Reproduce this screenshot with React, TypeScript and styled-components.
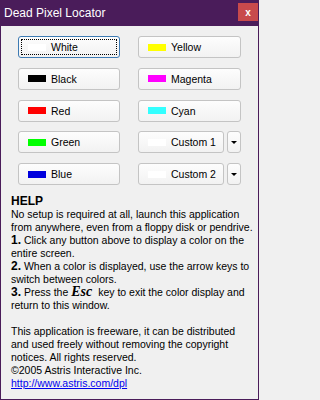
import React from 'react';
import styled, { createGlobalStyle } from 'styled-components';

const GlobalStyle = createGlobalStyle`
  html, body {
    margin: 0;
    padding: 0;
    background: #f0f0f0;
  }
  * {
    box-sizing: border-box;
  }
`;

interface ColorItem {
  label: string;
  swatch: string;
  custom?: boolean;
}

const COLORS: ColorItem[] = [
  { label: 'White', swatch: '#ffffff' },
  { label: 'Yellow', swatch: '#ffff00' },
  { label: 'Black', swatch: '#000000' },
  { label: 'Magenta', swatch: '#ff00ff' },
  { label: 'Red', swatch: '#ff0000' },
  { label: 'Cyan', swatch: '#33ffff' },
  { label: 'Green', swatch: '#00ff00' },
  { label: 'Custom 1', swatch: '#ffffff', custom: true },
  { label: 'Blue', swatch: '#0000dd' },
  { label: 'Custom 2', swatch: '#ffffff', custom: true },
];

// Window frame
const Window = styled.div`
  width: 259px;
  height: 400px;
  border: 1px solid #4a1c5a;
  border-top: none;
  background: #f0f0f0;
  display: flex;
  flex-direction: column;
  font-family: 'Liberation Sans', Arial, sans-serif;
  color: #000;
`;

const TitleBar = styled.div`
  height: 26px;
  margin: 0 -1px;
  padding: 0 1px 0 4px;
  background: #4a1c5a;
  display: flex;
  justify-content: space-between;
  align-items: flex-start;
`;

const Title = styled.span`
  color: #ffffff;
  font-size: 12px;
  line-height: 26px;
`;

const CloseButton = styled.div`
  width: 20px;
  height: 18px;
  margin-top: 3px;
  background: #c84a4c;
  color: #ffffff;
  font-weight: bold;
  font-size: 10px;
  display: flex;
  align-items: center;
  justify-content: center;
`;

const Content = styled.div`
  padding: 10px 0 0 10px;
  display: flex;
  flex-direction: column;
`;

const ButtonGrid = styled.div`
  margin-left: 7px;
  display: grid;
  grid-template-columns: 102px 103px;
  grid-auto-rows: 22px;
  column-gap: 18px;
  row-gap: 9.75px;
`;

const ColorButton = styled.button<{ $focused?: boolean }>`
  position: relative;
  height: 22px;
  width: 100%;
  margin: 0;
  padding: 0 0 0 9px;
  display: flex;
  align-items: center;
  border: 1px solid ${p => (p.$focused ? '#3d7ab3' : '#c4c4c4')};
  border-radius: 3px;
  background: linear-gradient(#fdfdfd, #f2f2f2);
  font-family: 'Liberation Sans', Arial, sans-serif;
  font-size: 10.5px;
  color: #000;
  cursor: pointer;

  &::after {
    content: '';
    display: ${p => (p.$focused ? 'block' : 'none')};
    position: absolute;
    inset: 2px;
    border: 1px dotted #000;
  }
`;

const Swatch = styled.span<{ $color: string }>`
  width: 18px;
  height: 7px;
  margin-right: 5px;
  background: ${p => p.$color};
  flex: none;
`;

const CustomCell = styled.div`
  display: flex;
  gap: 3px;
`;

const CustomMain = styled(ColorButton)`
  width: 86px;
  flex: none;
`;

const DropButton = styled.button`
  width: 14px;
  height: 22px;
  margin: 0;
  padding: 0;
  border: 1px solid #c4c4c4;
  border-radius: 3px;
  background: linear-gradient(#fdfdfd, #f2f2f2);
  display: flex;
  align-items: center;
  justify-content: center;
`;

const Arrow = styled.span`
  width: 0;
  height: 0;
  border-left: 3px solid transparent;
  border-right: 3px solid transparent;
  border-top: 3px solid #000;
`;

const Help = styled.div`
  margin-top: 10px;
  font-size: 10.5px;
  line-height: 13px;
  white-space: nowrap;
`;

const HelpTitle = styled.div`
  font-size: 12px;
  font-weight: bold;
`;

const Step = styled.b`
  font-size: 12px;
  line-height: 10px;
`;

const Key = styled.b`
  font-family: 'Liberation Serif', 'Times New Roman', serif;
  font-style: italic;
  font-size: 14px;
  line-height: 10px;
  margin-right: 3px;
`;

const Spacer = styled.div`
  height: 13px;
`;

const Link = styled.a`
  color: #0000ee;
  text-decoration: underline;
`;

const App: React.FC = () => {
  return (
    <Window>
      <GlobalStyle />
      <TitleBar>
        <Title>Dead Pixel Locator</Title>
        <CloseButton>x</CloseButton>
      </TitleBar>
      <Content>
        <ButtonGrid>
          {COLORS.map((c, i) =>
            c.custom ? (
              <CustomCell key={c.label}>
                <CustomMain>
                  <Swatch $color={c.swatch} />
                  {c.label}
                </CustomMain>
                <DropButton>
                  <Arrow />
                </DropButton>
              </CustomCell>
            ) : (
              <ColorButton key={c.label} $focused={i === 0}>
                <Swatch $color={c.swatch} />
                {c.label}
              </ColorButton>
            )
          )}
        </ButtonGrid>
        <Help>
          <HelpTitle>HELP</HelpTitle>
          No setup is required at all, launch this application
          <br />
          from anywhere, even from a floppy disk or pendrive.
          <br />
          <Step>1.</Step> Click any button above to display a color on the
          <br />
          entire screen.
          <br />
          <Step>2.</Step> When a color is displayed, use the arrow keys to
          <br />
          switch between colors.
          <br />
          <Step>3.</Step> Press the <Key>Esc</Key> key to exit the color display and
          <br />
          return to this window.
          <Spacer />
          This application is freeware, it can be distributed
          <br />
          and used freely without removing the copyright
          <br />
          notices. All rights reserved.
          <br />
          ©2005 Astris Interactive Inc.
          <br />
          <Link href="#">http://www.astris.com/dpl</Link>
        </Help>
      </Content>
    </Window>
  );
};

export default App;
